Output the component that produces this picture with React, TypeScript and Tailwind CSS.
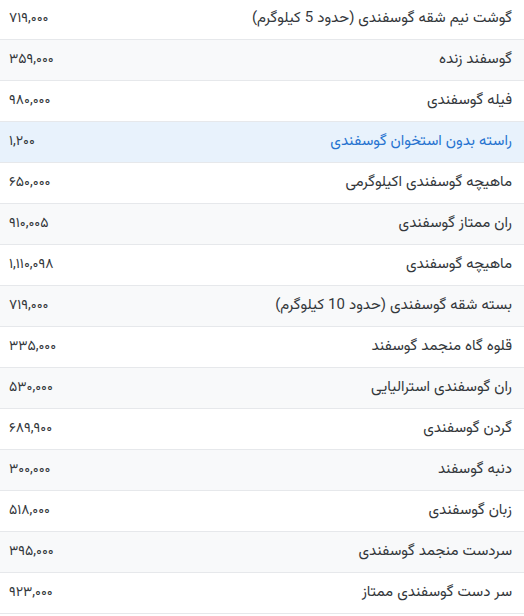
import React from "react";

const rows = [
  { name: "گوشت نیم شقه گوسفندی (حدود 5 کیلوگرم)", price: "۷۱۹,۰۰۰" },
  { name: "گوسفند زنده", price: "۳۵۹,۰۰۰" },
  { name: "فیله گوسفندی", price: "۹۸۰,۰۰۰" },
  { name: "راسته بدون استخوان گوسفندی", price: "۱,۲۰۰", active: true },
  { name: "ماهیچه گوسفندی اکیلوگرمی", price: "۶۵۰,۰۰۰" },
  { name: "ران ممتاز گوسفندی", price: "۹۱۰,۰۰۵" },
  { name: "ماهیچه گوسفندی", price: "۱,۱۱۰,۰۹۸" },
  { name: "بسته شقه گوسفندی (حدود 10 کیلوگرم)", price: "۷۱۹,۰۰۰" },
  { name: "قلوه گاه منجمد گوسفند", price: "۳۳۵,۰۰۰" },
  { name: "ران گوسفندی استرالیایی", price: "۵۳۰,۰۰۰" },
  { name: "گردن گوسفندی", price: "۶۸۹,۹۰۰" },
  { name: "دنبه گوسفند", price: "۳۰۰,۰۰۰" },
  { name: "زبان گوسفندی", price: "۵۱۸,۰۰۰" },
  { name: "سردست منجمد گوسفندی", price: "۳۹۵,۰۰۰" },
  { name: "سر دست گوسفندی ممتاز", price: "۹۲۳,۰۰۰" },
];

export default function App() {
  return (
    <div
      dir="rtl"
      className="w-[524px] bg-white -mt-[1px]"
      style={{ fontFamily: 'Vazirmatn, "Noto Sans Arabic", "DejaVu Sans", sans-serif' }}
    >
      {rows.map((r, i) => (
        <div
          key={i}
          className={
            "flex items-center justify-between h-[41px] border-b border-[#e6e8eb] pr-[12px] pl-[9px] text-[15px] " +
            (r.active
              ? "bg-[#e8f2fc] text-[#2673d0]"
              : i % 2 === 1
              ? "bg-[#f8f9fa] text-[#33373b]"
              : "bg-white text-[#33373b]")
          }
        >
          <span>{r.name}</span>
          <span className="text-[14px] text-[#33373b]">{r.price}</span>
        </div>
      ))}
    </div>
  );
}
